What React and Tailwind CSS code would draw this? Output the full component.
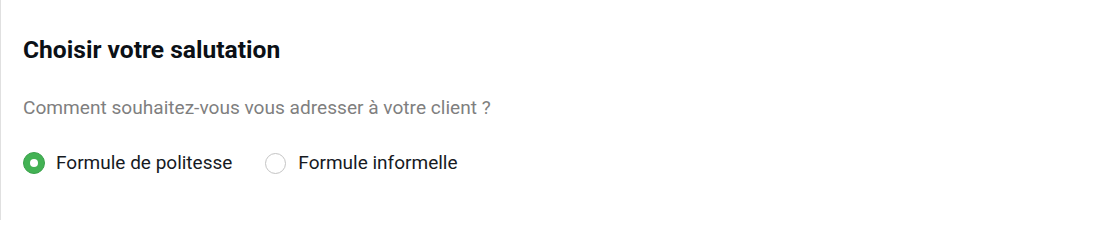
export default function App() {
  return (
    <div className="h-[220px] w-[1101px] border-l border-[#e0e0e0] bg-white pl-[22px] pt-[34px] font-['Roboto',sans-serif]">
      <h2 className="text-[24.6px] font-bold leading-[32px] text-[#0b1016]">Choisir votre salutation</h2>
      <p className="mt-[28px] text-[19.1px] leading-[28px] text-[#7f7f7f]">Comment souhaitez-vous vous adresser à votre client ?</p>
      <div className="mt-[27px] flex items-center gap-[33px]">
        <label className="flex items-center gap-[11px] text-[19px] leading-[28px] text-[#161a1f]">
          <span className="flex h-[22px] w-[22px] items-center justify-center rounded-full border border-[#3ba14c] bg-[#43b254]">
            <span className="h-[8px] w-[8px] rounded-full bg-white" />
          </span>
          Formule de politesse
        </label>
        <label className="flex items-center gap-[12px] text-[19px] leading-[28px] text-[#161a1f]">
          <span className="h-[21px] w-[21px] rounded-full border border-[#c4c4c4] bg-white" />
          Formule informelle
        </label>
      </div>
    </div>
  )
}
